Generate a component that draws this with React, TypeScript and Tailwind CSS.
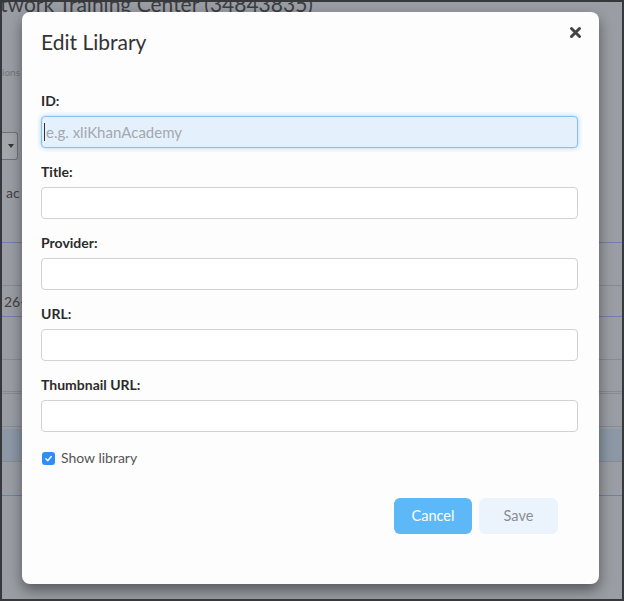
import React from "react";

function Field({ label, focused, placeholder }: { label: string; focused?: boolean; placeholder?: string }) {
  return (
    <div className="flex flex-col">
      <label className="text-[14px] leading-[18px] font-bold text-[#2b2b2b] mb-[6px]">{label}</label>
      {focused ? (
        <div className="relative h-[32px] rounded-[4px] border border-[#86bff0] bg-[#e4f1fd] shadow-[0_0_5px_rgba(102,175,233,0.55)] flex items-center pl-[2px]">
          <span className="w-px h-[18px] bg-[#333] mr-[1px]" />
          <span className="text-[15px] text-[#a3a8ae]">{placeholder}</span>
        </div>
      ) : (
        <div className="h-[32px] rounded-[4px] border border-[#d2d2d2] bg-white" />
      )}
    </div>
  );
}

export default function App() {
  return (
    <div
      className="relative w-[624px] h-[601px] overflow-hidden border-2 border-[#37383b] bg-[#9a9da3]"
      style={{ fontFamily: "Lato, 'Open Sans', sans-serif" }}
    >
      {/* backdrop page (dimmed) */}
      <div className="flex flex-col text-[#3b3d41]">
        <div className="mt-[-12px] ml-[-2px] text-[21px] leading-[28px] whitespace-nowrap">twork Training Center (34843835)</div>
        <div className="mt-[48px] text-[10px] leading-[12px] text-[#74777c]">ions</div>
        <div className="mt-[54px] w-[16px] h-[28px] rounded-r-[3px] border border-l-0 border-[#6f7277] bg-[#a3a6ab] flex items-center justify-end pr-[3px]">
          <span className="w-0 h-0 border-l-[3px] border-r-[3px] border-t-[4px] border-l-transparent border-r-transparent border-t-[#333]" />
        </div>
        <div className="mt-[25px] ml-[4px] text-[14px] leading-[16px] text-[#404246]">ac</div>
        <div className="mt-[41px] h-px bg-[#6e7fae]" />
        <div className="mt-[42px] h-px bg-[#888b91]" />
        <div className="h-[30px] flex items-center text-[14px] text-[#404246] ml-[2px]">26-</div>
        <div className="h-px bg-[#6e7fae]" />
        <div className="mt-[42px] h-px bg-[#888b91]" />
        <div className="mt-[31px] h-px bg-[#888b91]" />
        <div className="mt-[1px] h-px bg-[#888b91]" />
        <div className="mt-[32px] h-px bg-[#888b91]" />
        <div className="mt-[2px] h-[32px] bg-[#8c98a6]" />
        <div className="h-px bg-[#888b91]" />
        <div className="mt-[33px] h-px bg-[#6e7fae]" />
      </div>

      {/* modal */}
      <div className="absolute left-[20px] top-[10px] w-[577px] h-[572px] rounded-[8px] bg-[#fdfdfd] shadow-[0_6px_14px_rgba(0,0,0,0.45)] flex flex-col px-[19px] pr-[21px]">
        <div className="flex items-start justify-between pt-[16px]">
          <h2 className="text-[21px] leading-[28px] text-[#333]">Edit Library</h2>
          <button className="mt-[-2px] mr-[-4px] text-[#444]">
            <svg width="13" height="13" viewBox="0 0 13 13">
              <path d="M2.5 2.5 L10.5 10.5 M10.5 2.5 L2.5 10.5" stroke="#444" strokeWidth="3" strokeLinecap="round" />
            </svg>
          </button>
        </div>
        <div className="mt-[36px] flex flex-col gap-[15px]">
          <Field label="ID:" focused placeholder="e.g. xliKhanAcademy" />
          <Field label="Title:" />
          <Field label="Provider:" />
          <Field label="URL:" />
          <Field label="Thumbnail URL:" />
        </div>
        <div className="mt-[17px] flex items-center gap-[6px] ml-[1px]">
          <span className="w-[13px] h-[13px] rounded-[3px] bg-[#2f8ef5] flex items-center justify-center">
            <svg width="9" height="9" viewBox="0 0 10 10">
              <path d="M2 5.3 L4.2 7.5 L8 2.8" stroke="white" strokeWidth="1.5" fill="none" strokeLinecap="round" strokeLinejoin="round" />
            </svg>
          </span>
          <span className="text-[14px] leading-[18px] text-[#555]">Show library</span>
        </div>
        <div className="mt-[31px] flex justify-end gap-[7px] pr-[20px]">
          <button className="w-[78px] h-[36px] rounded-[6px] bg-[#5db8f8] text-white text-[14.5px]">Cancel</button>
          <button className="w-[79px] h-[36px] rounded-[6px] bg-[#ebf4fd] text-[#8a8d91] text-[14.5px]">Save</button>
        </div>
      </div>
    </div>
  );
}
